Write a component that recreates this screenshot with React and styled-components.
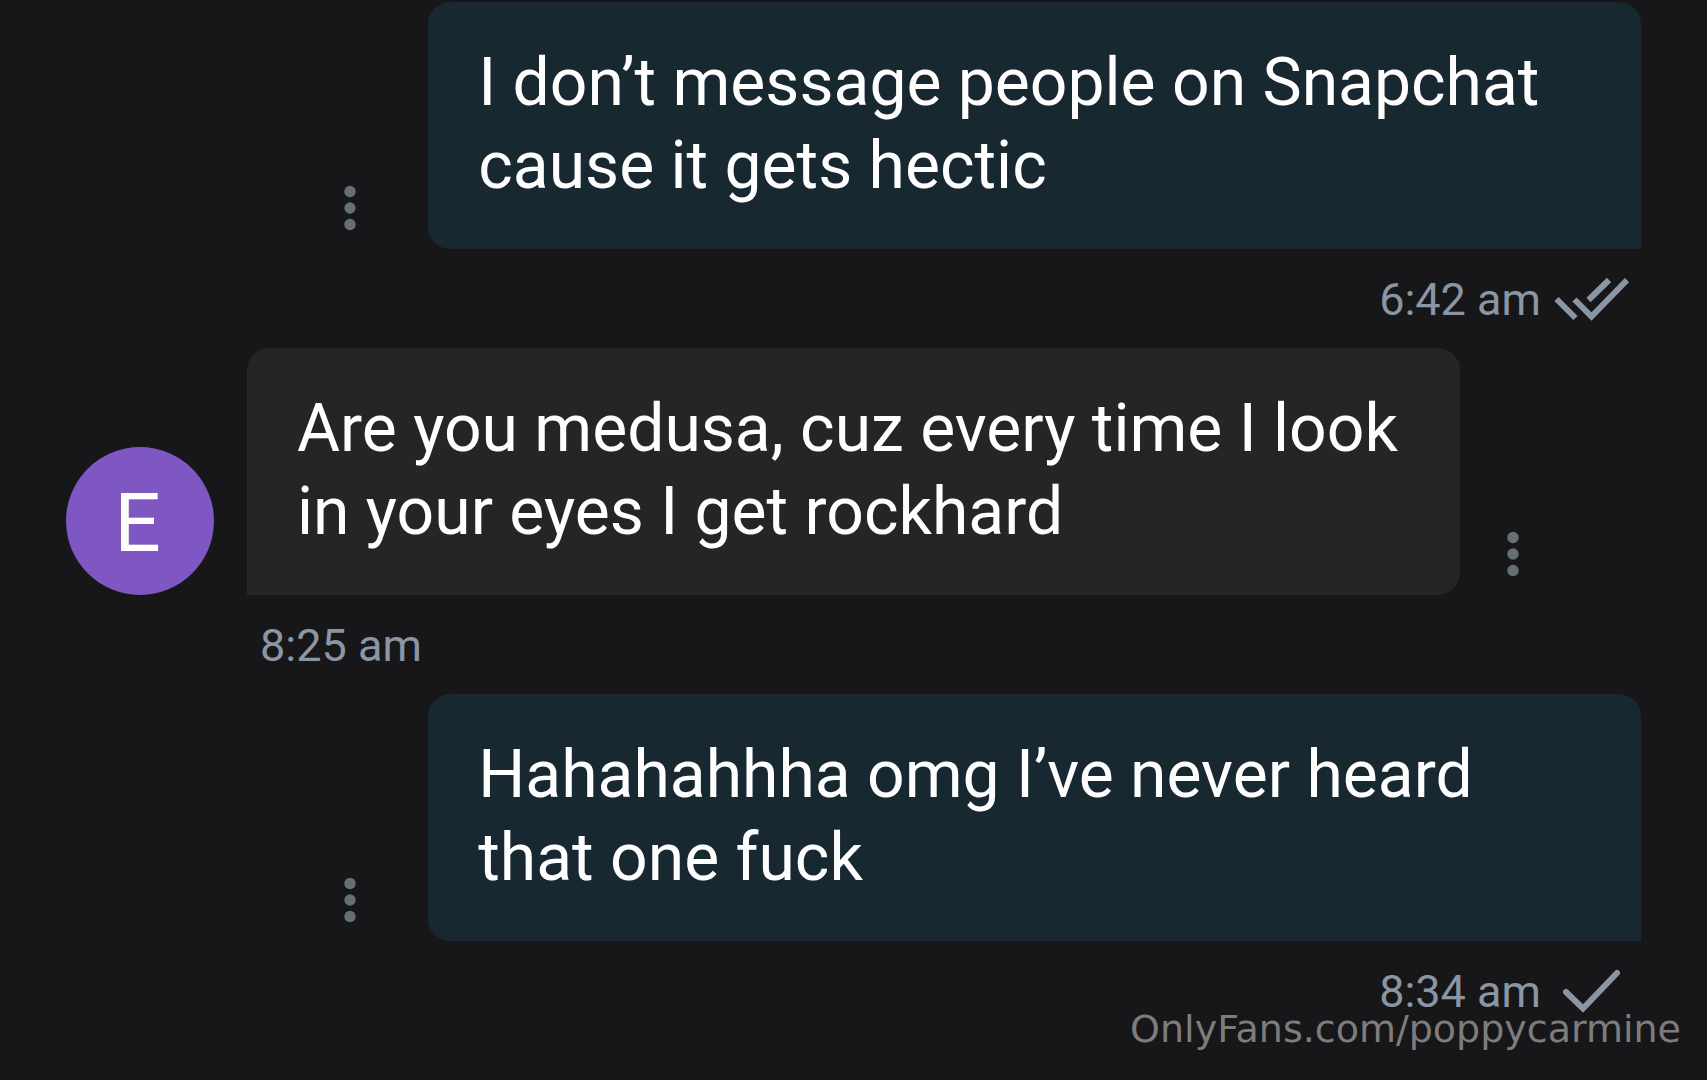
import React from "react"
import styled, { createGlobalStyle } from "styled-components"

const GlobalStyle = createGlobalStyle`
  * {
    box-sizing: border-box;
  }

  body {
    margin: 0;
    background-color: #171719;
    font-family: Roboto, "Liberation Sans", sans-serif;
  }
`

const ChatWrapper = styled.main`
  position: relative;
  min-height: 100vh;
  padding: 2px 66px 0;
  overflow: hidden;
`

const MessageWrapper = styled.article`
  display: flex;
  flex-flow: column nowrap;
`

const MessageRow = styled.div`
  display: flex;
  align-items: flex-end;
  justify-content: ${({ $outgoing }) => ($outgoing ? 'flex-end' : 'flex-start')};
`

const Avatar = styled.div`
  display: flex;
  align-items: center;
  justify-content: center;
  flex: none;
  width: 148px;
  height: 148px;
  margin-right: 33px;
  padding: 4px 5px 0 0;
  border-radius: 50%;
  background-color: #7e57c2;
  color: #fff;
  font-size: 82px;
  line-height: 96px;
`

const Bubble = styled.p`
  width: 77%;
  margin: 0;
  padding: 39px 50px 42px;
  border-radius: ${({ $outgoing }) => ($outgoing ? '22px 22px 0 22px' : '22px 22px 22px 0')};
  background-color: ${({ $outgoing }) => ($outgoing ? '#172830' : '#252527')};
  color: #fefefe;
  font-size: 66px;
  line-height: 83px;
`

const MenuButton = styled.button`
  flex: none;
  width: 66px;
  height: 82px;
  margin: ${({ $outgoing }) => ($outgoing ? '0 45px 0 0' : '0 0 0 20px')};
  padding: 0;
  border: 0;
  background: none;
  color: #657075;
  cursor: pointer;

  svg {
    display: block;
    margin: 0 auto;
  }
`

const Meta = styled.div`
  display: flex;
  align-items: center;
  justify-content: ${({ $outgoing }) => ($outgoing ? 'flex-end' : 'flex-start')};
  gap: 13px;
  height: 99px;
  padding: 3px 12px 0;
  margin-left: ${({ $outgoing }) => ($outgoing ? '0' : '182px')};
  color: #8a96a3;
  font-size: 45px;
  line-height: 52px;
`

const Watermark = styled.span`
  position: absolute;
  right: 26px;
  bottom: 28px;
  color: #7d7d7e;
  font-family: "DejaVu Sans", sans-serif;
  font-size: 38px;
  line-height: 46px;
`

function DotsIcon() {
  return (
    <svg width="12" height="46" viewBox="0 0 12 46" fill="currentColor" aria-hidden="true">
      <circle cx="6" cy="6.5" r="5.7" />
      <circle cx="6" cy="23" r="5.7" />
      <circle cx="6" cy="39.5" r="5.7" />
    </svg>
  )
}

function StatusIcon({ read }) {
  return (
    <svg width="75" height="46" viewBox="0 0 75 46" fill="none" stroke="currentColor" strokeWidth="6" aria-hidden="true">
      {read ? (
        <>
          <path d="M2.5 22L21.5 41" />
          <path d="M20.5 22.5L37.5 39.5L73 3" />
          <path d="M34.5 23L55 3" />
        </>
      ) : (
        <path d="M12 23L29 39.5L63 4" strokeLinecap="round" />
      )}
    </svg>
  )
}

const messages = [
  { id: 1, outgoing: true, text: 'I don’t message people on Snapchat cause it gets hectic', time: '6:42 am', read: true },
  { id: 2, outgoing: false, text: 'Are you medusa, cuz every time I look in your eyes I get rockhard', time: '8:25 am' },
  { id: 3, outgoing: true, text: 'Hahahahhha omg I’ve never heard that one fuck', time: '8:34 am', read: false },
]

function Message({ outgoing, text, time, read }) {
  const menu = (
    <MenuButton type="button" aria-label="Message options" $outgoing={outgoing}>
      <DotsIcon />
    </MenuButton>
  )

  return (
    <MessageWrapper>
      <MessageRow $outgoing={outgoing}>
        {outgoing ? menu : <Avatar>E</Avatar>}
        <Bubble $outgoing={outgoing}>{text}</Bubble>
        {!outgoing && menu}
      </MessageRow>
      <Meta $outgoing={outgoing}>
        <time>{time}</time>
        {outgoing && <StatusIcon read={read} />}
      </Meta>
    </MessageWrapper>
  )
}

function App() {
  return (
    <>
      <GlobalStyle />
      <ChatWrapper>
        {messages.map(({ id, ...message }) => (
          <Message key={id} {...message} />
        ))}
        <Watermark>OnlyFans.com/poppycarmine</Watermark>
      </ChatWrapper>
    </>
  )
}

export default App
